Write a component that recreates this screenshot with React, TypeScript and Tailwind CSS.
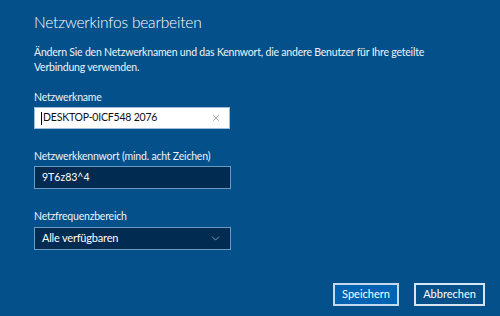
import { X, ChevronDown } from "lucide-react";

export default function App() {
  return (
    <div
      className="w-[500px] h-[316px] bg-[#03508a] text-[#eef3f8] flex flex-col overflow-hidden"
      style={{ fontFamily: 'Lato, "Noto Sans", sans-serif' }}
    >
      <div className="pl-[34px] pr-4 pt-[8px]">
        <h1 className="text-[15.5px] leading-[28px] font-light tracking-[-0.2px] text-white">Netzwerkinfos bearbeiten</h1>
        <p className="mt-[9px] w-[425px] text-[10.5px] leading-[15px] tracking-[-0.2px]">
          Ändern Sie den Netzwerknamen und das Kennwort, die andere Benutzer für Ihre geteilte Verbindung verwenden.
        </p>

        <div className="mt-[15px] text-[10.5px] leading-[15px] tracking-[-0.2px]">Netzwerkname</div>
        <div className="mt-[2px] w-[196px] h-[22px] bg-white border border-[#9fbedc] flex items-center pl-[6px] pr-[8px]">
          <span className="w-px h-[13px] bg-black mr-px" />
          <span className="flex-1 text-[10.5px] tracking-[-0.2px] text-[#111]">DESKTOP-0ICF548 2076</span>
          <X size={10} strokeWidth={1.5} className="text-[#666]" />
        </div>

        <div className="mt-[20px] text-[10.5px] leading-[15px] tracking-[-0.2px]">Netzwerkkennwort (mind. acht Zeichen)</div>
        <div className="mt-[2px] w-[197px] h-[23px] bg-[#012b50] border border-[#6e99c0] flex items-center pl-[7px]">
          <span className="text-[10.5px] text-white">9T6z83^4</span>
        </div>

        <div className="mt-[20px] text-[10.5px] leading-[15px] tracking-[-0.2px]">Netzfrequenzbereich</div>
        <div className="mt-[3px] w-[197px] h-[23px] bg-[#012b50] border border-[#6e99c0] flex items-center pl-[7px] pr-[8px]">
          <span className="flex-1 text-[11px] tracking-[-0.2px] text-white">Alle verfügbaren</span>
          <ChevronDown size={13} strokeWidth={1.5} className="text-[#9db8d2]" />
        </div>
      </div>

      <div className="mt-auto mb-[10px] mr-[15px] flex justify-end gap-[15px]">
        <button className="w-[66px] h-[23px] bg-[#0063b1] border-2 border-[#c5d9ec] text-[11px] text-white">
          Speichern
        </button>
        <button className="w-[71px] h-[23px] border-2 border-[#d8e4ef] text-[11px] text-white">
          Abbrechen
        </button>
      </div>
    </div>
  );
}
